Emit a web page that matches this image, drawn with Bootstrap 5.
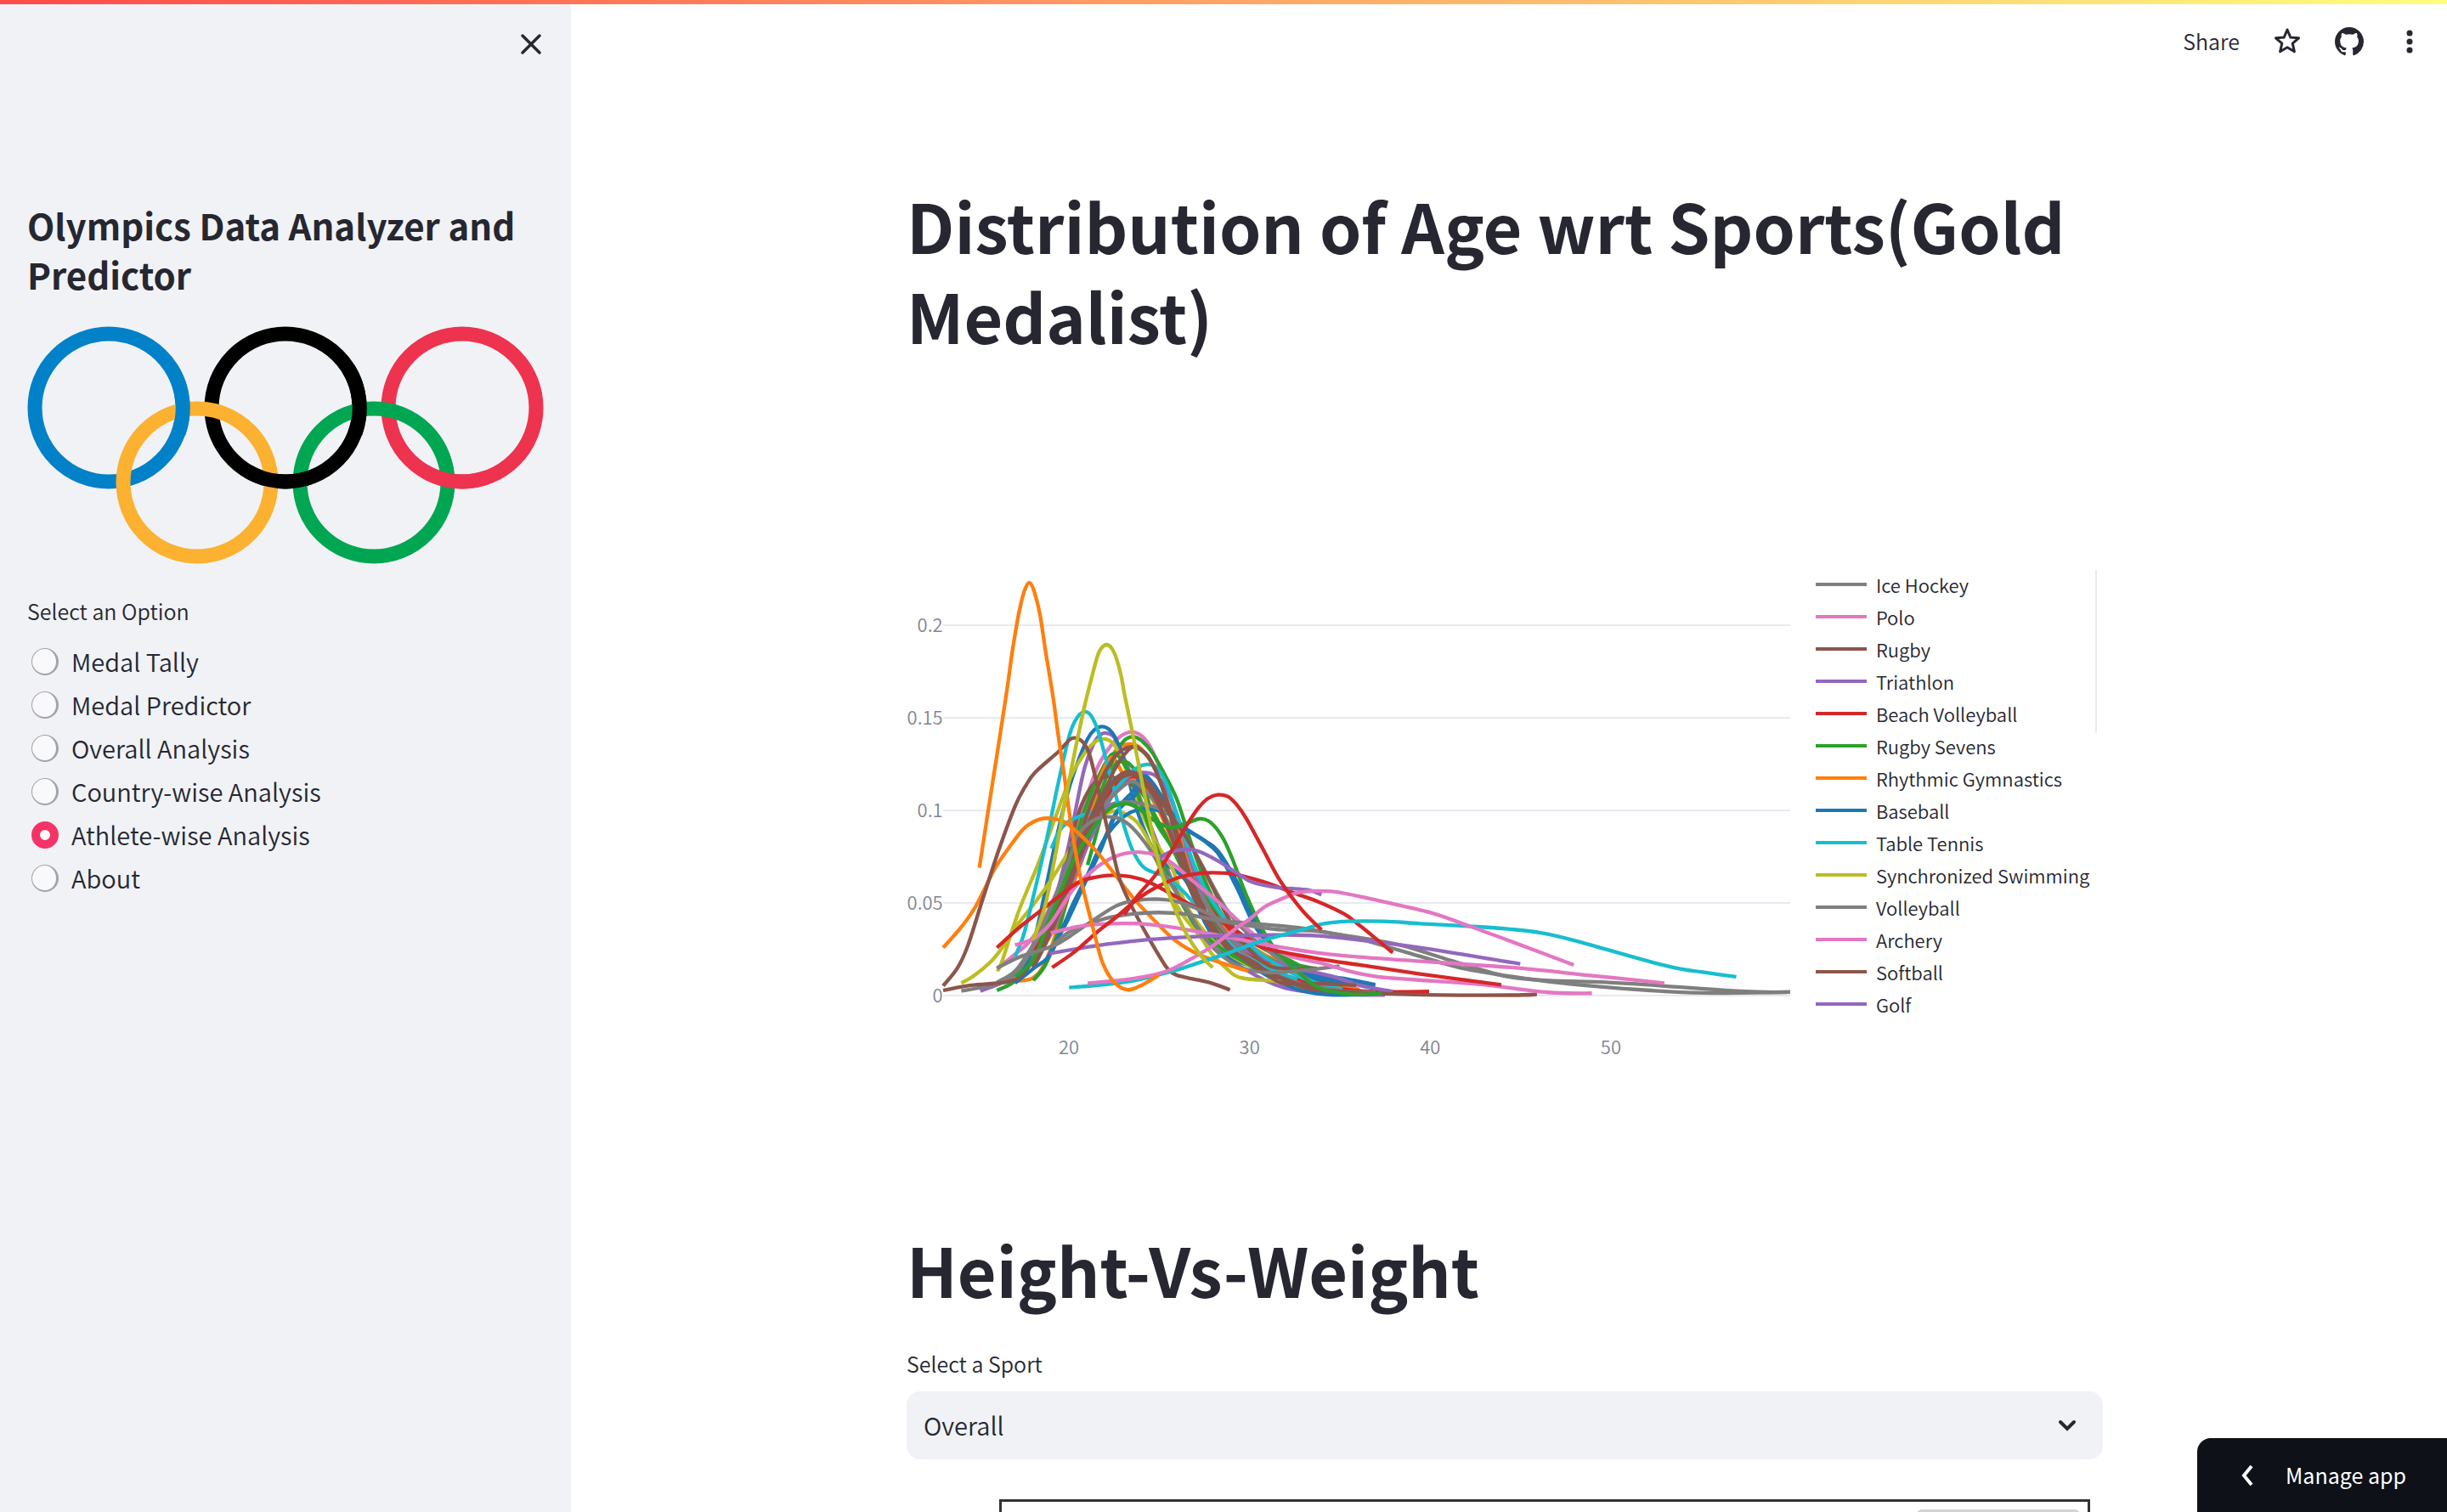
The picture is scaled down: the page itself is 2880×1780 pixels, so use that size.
<!DOCTYPE html>
<html lang="en">
<head>
<meta charset="utf-8">
<meta name="viewport" content="width=device-width, initial-scale=1">
<title>Olympics Data Analyzer and Predictor</title>
<link href="https://cdn.jsdelivr.net/npm/bootstrap@5.3.0/dist/css/bootstrap.min.css" rel="stylesheet">
<style>
  body { font-family: "Noto Sans CJK SC", "Noto Sans", sans-serif; font-weight: 350; color: #262730; font-size: 29px; background: #fff; }
  .top-stripe { height: 5px; background: linear-gradient(90deg, #ff4b4b, #fffd80); z-index: 5; }
  .side-panel { width: 672px; background: #f0f2f6; padding: 24px 32px; }
  .side-close { height: 56px; }
  .icon-btn { color: #262730; line-height: 0; }
  .share-btn { color: #262730; font-size: 25px; line-height: 40px; font-weight: 350; }
  .side-title { font-size: 42px; line-height: 58px; font-weight: 600; margin: 156px 0 32px; }
  .field-label { font-size: 25px; line-height: 40px; }
  .sport-label { margin: 38px 0 13px; }
  .option-group { margin-top: 35px; }
  .option-group legend { margin-bottom: 14px; }
  .option { height: 51px; gap: 15px; padding-left: 5px; }
  .option .form-check-input { width: 32px; height: 32px; background-color: #f9f9fb; border: 1px solid #a3a4ab; border-right-width: 3px; border-bottom-width: 2px; }
  .option .form-check-input:checked { background: #fff; border: 10px solid #f63366; }
  .toolbar { top: 0; right: 0; padding: 28px 32px 0 0; height: 80px; gap: 38px; }
  .main-pane { padding-top: 212px; padding-right: 10px; }
  .content-block { max-width: 1408px; }
  .page-title { font-size: 79px; line-height: 106px; font-weight: 700; }
  .chart-row { margin-top: 245px; margin-bottom: 172px; }
  .chart-row svg { width: 74%; }
  .chart-row text { font-size: 66px; fill: #808495; }
  .grid-line { stroke: #e6eaf1; stroke-width: 6; }
  .series { fill: none; stroke-width: 13; }
  .legend-list { font-size: 22px; line-height: 38px; margin-left: 28px; }
  .legend-list li { gap: 11px; white-space: nowrap; }
  .swatch { width: 60px; height: 4px; }
  .legend-scroll { width: 2px; height: 192px; right: 7px; top: 2px; background: #ebebed; }
  .sport-select { height: 80px; font-size: 29px; font-weight: 350; border: 0; border-radius: 16px; background: #f0f2f6; color: #262730; padding: 0 20px; }
  .select-arrow { right: 30px; top: 32px; pointer-events: none; }
  .scatter-frame { margin: 47px 15px 0 109px; height: 900px; border: 3px solid #333; }
  .scatter-key { width: 192px; height: 240px; margin: 9px 9px 0 auto; border: 3px solid #d4d4d4; border-radius: 6px; }
  .manage-btn { right: 0; bottom: 0; width: 294px; height: 87px; background: #0e1117; color: #fff; border-radius: 16px 0 0 0; font-size: 25px; padding: 0 0 0 51px; gap: 37px; }
  .manage-btn:hover { background: #0e1117; color: #fff; }
</style>
<script src="https://cdn.jsdelivr.net/npm/bootstrap@5.3.0/dist/js/bootstrap.bundle.min.js"></script>
</head>
<body class="vh-100 overflow-hidden">
<div class="top-stripe position-absolute top-0 start-0 w-100"></div>
<div class="d-flex vh-100">
  <aside class="side-panel flex-shrink-0">
    <div class="side-close d-flex justify-content-end align-items-center">
      <button type="button" class="btn p-0 border-0 icon-btn" aria-label="Close sidebar">
        <svg width="30" height="30" viewBox="0 0 30 30" stroke="currentColor" stroke-width="3.500" stroke-linecap="round"><path d="M5 5 25 25M25 5 5 25"/></svg>
      </button>
    </div>
    <h2 class="side-title">Olympics Data Analyzer and Predictor</h2>
    <svg class="w-100 d-block" viewBox="0 0 608 280" fill="none" stroke-width="17" role="img" aria-label="Olympic rings">
      <circle cx="96" cy="96" r="87" stroke="#0081c8"/>
      <circle cx="304" cy="96" r="87" stroke="#000"/>
      <circle cx="512" cy="96" r="87" stroke="#ee334e"/>
      <circle cx="200" cy="184" r="87" stroke="#fcb131"/>
      <circle cx="408" cy="184" r="87" stroke="#00a651"/>
      <path d="M170 50A87 87 0 0 1 178 126" stroke="#0081c8"/>
      <path d="M378 50A87 87 0 0 1 386 126" stroke="#000"/>
      <path d="M333 178A87 87 0 0 1 260 171" stroke="#000"/>
      <path d="M541 178A87 87 0 0 1 468 171" stroke="#ee334e"/>
    </svg>
    <fieldset class="option-group">
      <legend class="field-label pb-0">Select an Option</legend>
      <div class="option d-flex align-items-center"><input class="form-check-input m-0" type="radio" name="view" id="v1"><label for="v1">Medal Tally</label></div>
      <div class="option d-flex align-items-center"><input class="form-check-input m-0" type="radio" name="view" id="v2"><label for="v2">Medal Predictor</label></div>
      <div class="option d-flex align-items-center"><input class="form-check-input m-0" type="radio" name="view" id="v3"><label for="v3">Overall Analysis</label></div>
      <div class="option d-flex align-items-center"><input class="form-check-input m-0" type="radio" name="view" id="v4"><label for="v4">Country-wise Analysis</label></div>
      <div class="option d-flex align-items-center"><input class="form-check-input m-0" type="radio" name="view" id="v5" checked><label for="v5">Athlete-wise Analysis</label></div>
      <div class="option d-flex align-items-center"><input class="form-check-input m-0" type="radio" name="view" id="v6"><label for="v6">About</label></div>
    </fieldset>
  </aside>

  <main class="main-pane flex-grow-1 overflow-hidden">
    <div class="content-block mx-auto">
      <h1 class="page-title m-0">Distribution of Age wrt Sports(Gold Medalist)</h1>
      <div class="chart-row d-flex align-items-start position-relative">
        <svg id="ageChart" class="flex-shrink-0" viewBox="-339 -453 3126 1800" role="img" aria-label="Age distribution by sport">
          <g class="grid-line"><path d="M-210-252H2781M-210 75H2781M-210 402H2781M-210 729H2781M-210 1056H2781"/></g>
          <g id="curves"></g>
          <g text-anchor="end"><text x="-211" y="-228">0.2</text><text x="-211" y="99">0.15</text><text x="-211" y="426">0.1</text><text x="-211" y="753">0.05</text><text x="-211" y="1080">0</text></g>
          <g text-anchor="middle"><text x="234" y="1262">20</text><text x="872" y="1262">30</text><text x="1510" y="1262">40</text><text x="2148" y="1262">50</text></g>
        </svg>
        <ul class="legend-list list-unstyled mb-0" id="legend"></ul>
        <div class="legend-scroll position-absolute"></div>
      </div>
      <h1 class="page-title m-0">Height-Vs-Weight</h1>
      <label for="sport" class="field-label sport-label d-block">Select a Sport</label>
      <div class="position-relative">
        <select id="sport" class="form-select sport-select"><option>Overall</option></select>
        <svg class="select-arrow position-absolute" width="24" height="18" viewBox="0 0 24 18" fill="none" stroke="#262730" stroke-width="4" stroke-linecap="round"><path d="M4 4l8 8 8-8"/></svg>
      </div>
      <div class="scatter-frame"><div class="scatter-key"></div></div>
    </div>
  </main>
</div>

<div class="toolbar position-absolute d-flex align-items-start">
  <button type="button" class="btn p-0 border-0 share-btn">Share</button>
  <button type="button" class="btn p-0 border-0 icon-btn pt-1" aria-label="Favourite"><svg width="36" height="34" viewBox="0 0 36 34" fill="none" stroke="currentColor" stroke-width="3" stroke-linejoin="round"><path d="M18 3l3.800 9 9.700.8-7.300 6.400 2.200 9.500-8.400-5-8.400 5 2.200-9.500-7.300-6.400 9.700-.8z"/></svg></button>
  <button type="button" class="btn p-0 border-0 icon-btn pt-1" aria-label="GitHub"><svg width="34" height="34" viewBox="0 0 16 16" fill="currentColor"><path d="M8 0C3.580 0 0 3.580 0 8c0 3.540 2.290 6.530 5.470 7.590.4.070.55-.17.55-.38 0-.19-.01-.82-.01-1.490-2.010.37-2.530-.49-2.690-.94-.09-.23-.48-.94-.82-1.130-.28-.15-.68-.52-.01-.53.63-.01 1.080.58 1.230.82.72 1.210 1.870.87 2.330.66.07-.52.28-.87.51-1.070-1.780-.2-3.640-.89-3.640-3.950 0-.87.31-1.590.82-2.150-.08-.2-.36-1.020.08-2.120 0 0 .67-.21 2.200.82.64-.18 1.320-.27 2-.27s1.360.09 2 .27c1.530-1.040 2.200-.82 2.200-.82.44 1.100.16 1.920.08 2.120.51.56.82 1.270.82 2.150 0 3.070-1.870 3.750-3.650 3.950.29.25.54.73.54 1.480 0 1.070-.01 1.930-.01 2.200 0 .21.15.46.55.38A8.010 8.010 0 0 0 16 8c0-4.420-3.580-8-8-8z"/></svg></button>
  <button type="button" class="btn p-0 border-0 icon-btn pt-1 ms-1" aria-label="More options"><svg width="24" height="34" viewBox="0 0 24 34" fill="currentColor"><circle cx="12" cy="7" r="3.500"/><circle cx="12" cy="17" r="3.500"/><circle cx="12" cy="27" r="3.500"/></svg></button>
</div>

<button type="button" class="btn manage-btn position-absolute d-flex align-items-center border-0">
  <svg width="16" height="26" viewBox="0 0 16 26" fill="none" stroke="#fff" stroke-width="4"><path d="M13 2 4 13l9 11"/></svg>
  <span>Manage app</span>
</button>

<script>
  const colors = { o: '#ff7f0e', b: '#1f77b4', g: '#2ca02c', r: '#d62728', p: '#9467bd', n: '#8c564b', k: '#e377c2', y: '#7f7f7f', l: '#bcbd22', c: '#17becf' };

  // One entry per sport: colour key, then x,y pairs along its density curve.
  const series = [
    ['k', '-20,960 44,910 100,860 160,760 210,640 260,470 300,345 340,240 385,170 420,138 455,125 490,138 520,175 550,240 590,350 640,500 700,650 780,800 850,880 960,940 1100,990 1240,1030'],
    ['o', '44,1005 105,995 150,940 200,800 260,600 310,420 350,290 400,190 450,168 490,185 540,260 600,420 650,560 720,720 800,830 880,900 1003,940 1142,1006'],
    ['g', '108,1003 150,950 190,850 250,640 300,480 350,330 400,200 430,155 460,142 490,155 530,200 580,290 620,375 660,500 710,640 780,780 860,880 960,930 1100,960'],
    ['p', '-79,1040 0,1010 60,970 120,900 180,740 230,540 262,380 290,250 320,170 345,135 370,130 395,145 430,220 470,320 520,450 570,580 640,740 720,860 850,960 1000,1030 1200,1052 1350,1054'],
    ['b', '44,985 85,940 110,870 150,690 190,500 230,340 270,220 300,150 325,117 350,106 378,118 405,160 435,250 465,370 500,470 550,575 600,608 650,655 700,770 750,860 800,920 880,955 960,1000 1060,1040 1170,1054 1290,1051'],
    ['l', '-18,970 0,930 60,750 130,580 200,390 240,285 270,230 310,175 350,150 390,165 420,220 460,320 500,430 550,530 600,610 650,740 740,860 850,940 1000,990 1200,1040'],
    ['l', '-146,1012 -100,985 -42,937 0,885 50,810 120,720 170,650 240,540 300,465 350,420 400,405 440,418 480,450 520,520 560,620 610,730 650,790 700,850 740,910 790,960 840,993 960,1005 1080,1020 1300,1045 1378,1050'],
    ['r', '108,940 170,840 230,710 290,550 340,420 400,330 450,290 490,290 540,350 600,490 660,620 730,730 800,820 900,920 1000,960 1150,1000'],
    ['o', '108,950 180,820 240,680 300,520 360,370 420,300 465,290 510,330 570,430 630,550 690,660 760,760 840,850 940,920 1040,960 1150,1005 1260,1010'],
    ['g', '150,850 210,720 270,560 330,420 390,320 450,290 510,370 560,460 610,550 680,660 750,750 830,830 920,890 1010,930 1140,1000 1240,1030'],
    ['n', '108,960 170,830 220,640 250,480 280,380 320,310 365,282 405,290 440,300 480,330 520,345 560,410 620,540 700,720 760,850 830,920 940,980 1060,1010 1249,1020'],
    ['g', '-20,1038 44,1005 100,940 170,760 230,590 290,400 340,280 385,205 420,225 460,300 510,440 570,600 650,760 720,850 840,930 960,980 1100,1010'],
    ['o', '108,930 180,780 240,630 300,430 340,300 385,215 430,280 465,295 500,320 560,420 620,560 700,700 800,850 920,940 1080,985 1260,1035'],
    ['g', '300,595 335,470 375,320 395,245 415,230 450,240 490,300 540,440 590,520 640,620 700,740 800,850 960,935 1140,1000'],
    ['r', '108,900 170,810 230,680 300,520 350,400 400,310 440,288 475,285 520,330 570,430 630,570 700,700 780,830 880,920 1000,985 1180,1030 1324,1042 1506,1042'],
    ['b', '44,1012 110,960 172,905 250,730 320,590 370,480 420,380 460,335 490,280 530,315 580,390 630,455 715,510 760,545 820,640 880,760 940,860 1010,950 1100,1000 1200,1015'],
    ['b', '170,905 230,780 300,630 350,520 400,450 450,410 505,398 560,405 610,430 650,470 715,510 765,560 820,660 870,760 930,860 1000,940 1080,985 1180,1002 1316,1020'],
    ['b', '160,920 225,800 290,660 345,545 395,420 440,370 470,345 490,275 530,305 575,375 620,445 660,475 725,520 775,570 830,680 885,800 950,890 1020,950 1100,980 1200,995 1316,1018'],
    ['y', '-146,1040 -20,1015 44,980 110,880 180,720 250,570 310,450 370,388 430,373 500,380 570,405 620,450 690,570 790,750 890,860 1010,950 1140,1030 1316,1045'],
    ['p', '108,920 180,820 250,640 330,460 400,330 450,280 495,268 540,280 580,330 620,430 670,600 740,770 850,890 1000,950 1170,990 1260,1020 1378,1042'],
    ['c', '172,537 200,475 235,440 280,420 330,402 370,370 410,315 460,262 500,241 540,248 575,300 610,400 650,520 700,650 780,780 900,900 1050,990 1200,1035'],
    ['c', '44,919 75,840 110,700 150,530 175,410 200,290 235,140 262,76 290,54 315,72 340,130 370,240 400,350 430,460 460,545 495,600 530,620 580,638 640,690 700,760 780,850 900,940 1040,1000'],
    ['y', '-20,1010 44,970 100,890 150,790 200,680 250,540 300,440 350,390 410,330 460,300 510,340 560,400 620,520 670,650 730,750 800,850 900,950 1040,1010 1200,1040'],
    ['n', '-210,1038 -111,1020 17,1008 70,980 120,910 190,760 260,600 330,430 390,300 450,265 500,300 560,400 620,560 690,740 780,870 880,940 1000,1000 1120,1035 1260,1046 1431,1052 1685,1055 1840,1054 1887,1052'],
    ['n', '100,950 160,850 220,700 280,510 340,370 400,300 460,275 520,310 580,400 650,500 720,630 790,770 860,880 940,950 1020,962 1110,960'],
    ['n', '108,950 180,800 230,640 290,440 340,310 390,220 425,187 455,178 485,186 520,220 560,310 600,450 650,630 700,760 760,850 830,910 900,945 980,1010 1120,1014 1249,1020'],
    ['n', '115,940 175,820 235,670 295,500 345,370 400,250 455,180 490,190 530,240 575,350 615,480 665,640 720,770 790,870 870,940 960,985 1080,1032 1240,1044'],
    ['g', '44,990 108,930 170,780 250,580 330,450 380,395 435,378 480,395 530,435 590,462 640,452 695,432 735,445 775,495 810,570 860,700 910,810 960,890 1040,970 1120,1030 1240,1052 1340,1048'],
    ['y', '235,530 290,460 330,432 370,425 410,430 460,465 520,540 580,640 650,750 720,860 780,920 850,960 940,975 1050,968 1190,952'],
    ['k', '44,878 110,855 170,800 250,680 330,605 380,573 430,555 490,550 540,560 600,590 670,650 750,715 830,790 900,850 1003,913 1131,943 1230,972 1324,990 1453,1000 1689,1017 1924,1045 2081,1048'],
    ['r', '-20,887 60,815 130,760 200,705 270,655 330,638 390,631 450,636 520,657 600,700 690,750 780,800 860,850 928,889 1110,925 1260,948 1474,980 1761,1018'],
    ['o', '-210,887 -144,812 -95,741 -26,605 40,510 80,462 130,434 175,431 220,444 265,480 330,545 390,620 460,710 540,795 610,862 690,910 770,940 868,970'],
    ['n', '-210,1022 -160,960 -122,878 -69,712 -15,546 45,385 80,318 115,268 200,192 240,150 265,148 290,170 310,215 345,360 385,530 415,650 455,740 520,860 580,958 610,982 650,993 730,1010 803,1036'],
    ['y', '-20,960 60,920 180,880 240,845 320,790 400,740 460,722 540,715 620,725 700,755 780,790 860,800 960,808 1056,818 1220,846 1324,862 1431,885 1581,932 1763,985 1903,1002 2096,1008 2331,1022 2620,1042 2781,1044'],
    ['y', '170,885 230,835 300,805 380,780 460,768 550,763 640,768 720,783 800,798 960,822 1100,828 1260,855 1303,868 1431,905 1624,960 1839,995 2010,1016 2256,1036 2471,1047 2781,1044'],
    ['k', '170,835 270,812 360,803 480,802 580,812 700,832 800,850 940,878 1110,905 1260,920 1474,935 1796,957 2074,985 2337,1012'],
    ['p', '165,908 330,880 500,860 640,850 780,845 960,842 1110,845 1260,860 1474,887 1828,944'],
    ['r', '175,957 250,905 330,835 400,780 470,720 540,675 620,640 700,624 790,624 860,637 940,660 1013,688 1110,723 1206,768 1260,808 1324,860 1378,905'],
    ['p', '555,570 590,550 640,540 690,546 760,580 830,625 880,655 960,673 1078,683 1126,700'],
    ['c', '235,1028 380,1015 480,1000 600,970 700,938 800,905 880,875 960,850 1056,824 1131,803 1217,794 1346,794 1474,802 1656,812 1785,821 1903,835 2021,862 2342,951 2471,973 2591,990'],
    ['k', '300,1013 420,1002 500,990 580,970 660,930 740,882 820,822 880,780 930,740 992,712 1046,692 1099,687 1174,690 1280,710 1346,725 1506,762 1646,810 1796,865 2017,948'],
    ['r', '430,770 480,700 540,630 600,540 650,455 690,395 725,360 760,347 795,353 825,380 860,430 920,540 981,652 1056,753 1126,824'],
    ['o', '-82,605 -35,302 12,0 36,-170 58,-297 76,-370 94,-402 112,-370 132,-290 155,-140 178,0 197,140 215,260 243,460 275,640 330,860 355,945 390,1005 436,1035 480,1025 550,985'],
    ['l', '108,860 150,740 190,540 215,400 250,220 275,100 300,-10 333,-136 350,-172 367,-183 384,-172 400,-140 419,-71 432,0 455,110 490,290 520,440 555,600 600,730 650,840 700,915 742,957']
  ];

  function smooth(text) {
    const p = text.split(' ').map(s => s.split(',').map(Number));
    let d = 'M' + p[0];
    for (let i = 0; i < p.length - 1; i++) {
      const a = p[i - 1] || p[i], b = p[i], c = p[i + 1], e = p[i + 2] || c;
      d += 'C' + [b[0] + (c[0] - a[0]) / 6, b[1] + (c[1] - a[1]) / 6, c[0] - (e[0] - b[0]) / 6, c[1] - (e[1] - b[1]) / 6, c[0], c[1]].map(v => Math.round(v));
    }
    return d;
  }
  document.getElementById('curves').innerHTML = series.map(s => `<path class="series" stroke="${colors[s[0]]}" d="${smooth(s[1])}"/>`).join('');

  const names = [['y', 'Ice Hockey'], ['k', 'Polo'], ['n', 'Rugby'], ['p', 'Triathlon'], ['r', 'Beach Volleyball'], ['g', 'Rugby Sevens'], ['o', 'Rhythmic Gymnastics'], ['b', 'Baseball'], ['c', 'Table Tennis'], ['l', 'Synchronized Swimming'], ['y', 'Volleyball'], ['k', 'Archery'], ['n', 'Softball'], ['p', 'Golf']];
  document.getElementById('legend').innerHTML = names.map(n => `<li class="d-flex align-items-center"><span class="swatch" style="background:${colors[n[0]]}"></span>${n[1]}</li>`).join('');
</script>
</body>
</html>
